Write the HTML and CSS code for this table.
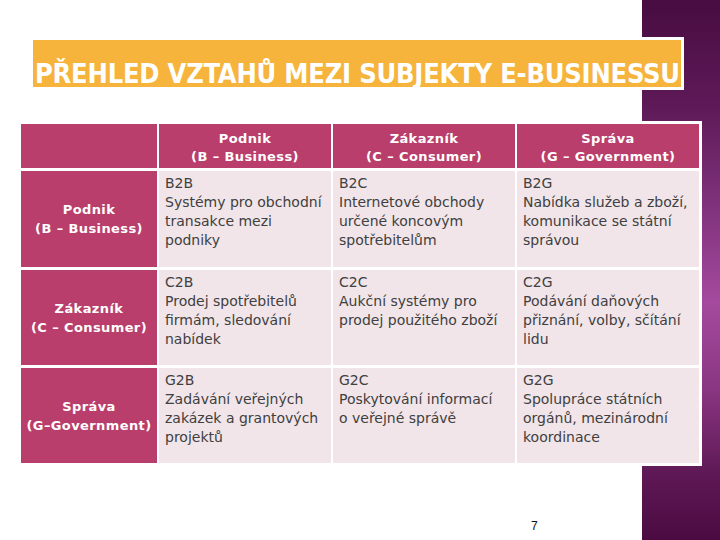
FILE: index.html
```html
<!DOCTYPE html>
<html lang="cs">
<head>
<meta charset="utf-8">
<title>Přehled vztahů mezi subjekty e-businessu</title>
<link rel="stylesheet" href="styles.css">
</head>
<body>
<div class="slide">
  <h1 class="title">PŘEHLED VZTAHŮ MEZI SUBJEKTY E-BUSINESSU</h1>
  <div class="grid">
    <div class="cell head corner"></div>
    <div class="cell head">Podnik<br>(B – Business)</div>
    <div class="cell head">Zákazník<br>(C – Consumer)</div>
    <div class="cell head">Správa<br>(G – Government)</div>

    <div class="cell side">Podnik<br>(B – Business)</div>
    <div class="cell body">B2B<br>Systémy pro obchodní transakce mezi podniky</div>
    <div class="cell body">B2C<br>Internetové obchody určené koncovým spotřebitelům</div>
    <div class="cell body">B2G<br>Nabídka služeb a zboží, komunikace se státní správou</div>

    <div class="cell side">Zákazník<br>(C – Consumer)</div>
    <div class="cell body">C2B<br>Prodej spotřebitelů firmám, sledování nabídek</div>
    <div class="cell body">C2C<br>Aukční systémy pro prodej použitého zboží</div>
    <div class="cell body">C2G<br>Podávání daňových přiznání, volby, sčítání lidu</div>

    <div class="cell side">Správa<br>(G–Government)</div>
    <div class="cell body">G2B<br>Zadávání veřejných zakázek a grantových projektů</div>
    <div class="cell body">G2C<br>Poskytování informací o&nbsp;veřejné správě</div>
    <div class="cell body">G2G<br>Spolupráce státních orgánů, mezinárodní koordinace</div>
  </div>
  <div class="page">7</div>
</div>
</body>
</html>
```
FILE: styles.css
```css
html, body {
  margin: 0;
  padding: 0;
}

body {
  width: 720px;
  height: 540px;
  overflow: hidden;
  font-family: "DejaVu Sans", Verdana, sans-serif;
  background:
    linear-gradient(180deg, #480c41 0%, #5e1a58 20%, #83357f 40%, #a54a9e 56%, #8a3682 72%, #5e1855 88%, #4b0b42 100%) no-repeat right top / 78px 100%,
    #ffffff;
}

.slide {
  display: flex;
  flex-direction: column;
  align-items: flex-start;
  padding-top: 37px;
}

.title {
  margin: 0 0 0 30px;
  box-sizing: border-box;
  width: 654px;
  height: 53px;
  border: 3px solid #ffffff;
  background: #f7b43c;
  color: #ffffff;
  font-family: "DejaVu Sans Condensed", "DejaVu Sans", sans-serif;
  font-stretch: condensed;
  font-weight: bold;
  font-size: 27px;
  line-height: 27px;
  padding: 20px 0 0 2px;
  white-space: nowrap;
  letter-spacing: -0.2px;
}

.grid {
  margin: 31px 0 0 18px;
  padding: 3px;
  background: #ffffff;
  display: grid;
  grid-template-columns: 136px 172px 182px 182px;
  grid-template-rows: 44px 96px 95px 95px;
  column-gap: 2px;
  row-gap: 3px;
}

.cell {
  box-sizing: border-box;
}

.head {
  background: #b93e6b;
  color: #ffffff;
  font-weight: bold;
  font-size: 13px;
  line-height: 18px;
  letter-spacing: 0.4px;
  text-align: center;
  padding-top: 6px;
}

.side {
  background: #b93e6b;
  color: #ffffff;
  font-weight: bold;
  font-size: 13px;
  line-height: 19px;
  letter-spacing: 0.4px;
  text-align: center;
  display: flex;
  align-items: center;
  justify-content: center;
}

.body {
  background: #f1e5e9;
  color: #404040;
  font-size: 14px;
  line-height: 19px;
  padding: 3px 6px 0 6px;
}

.page {
  margin: 53px 0 0 531px;
  font-family: "Liberation Sans", Arial, sans-serif;
  font-size: 12px;
  color: #111111;
}
```
